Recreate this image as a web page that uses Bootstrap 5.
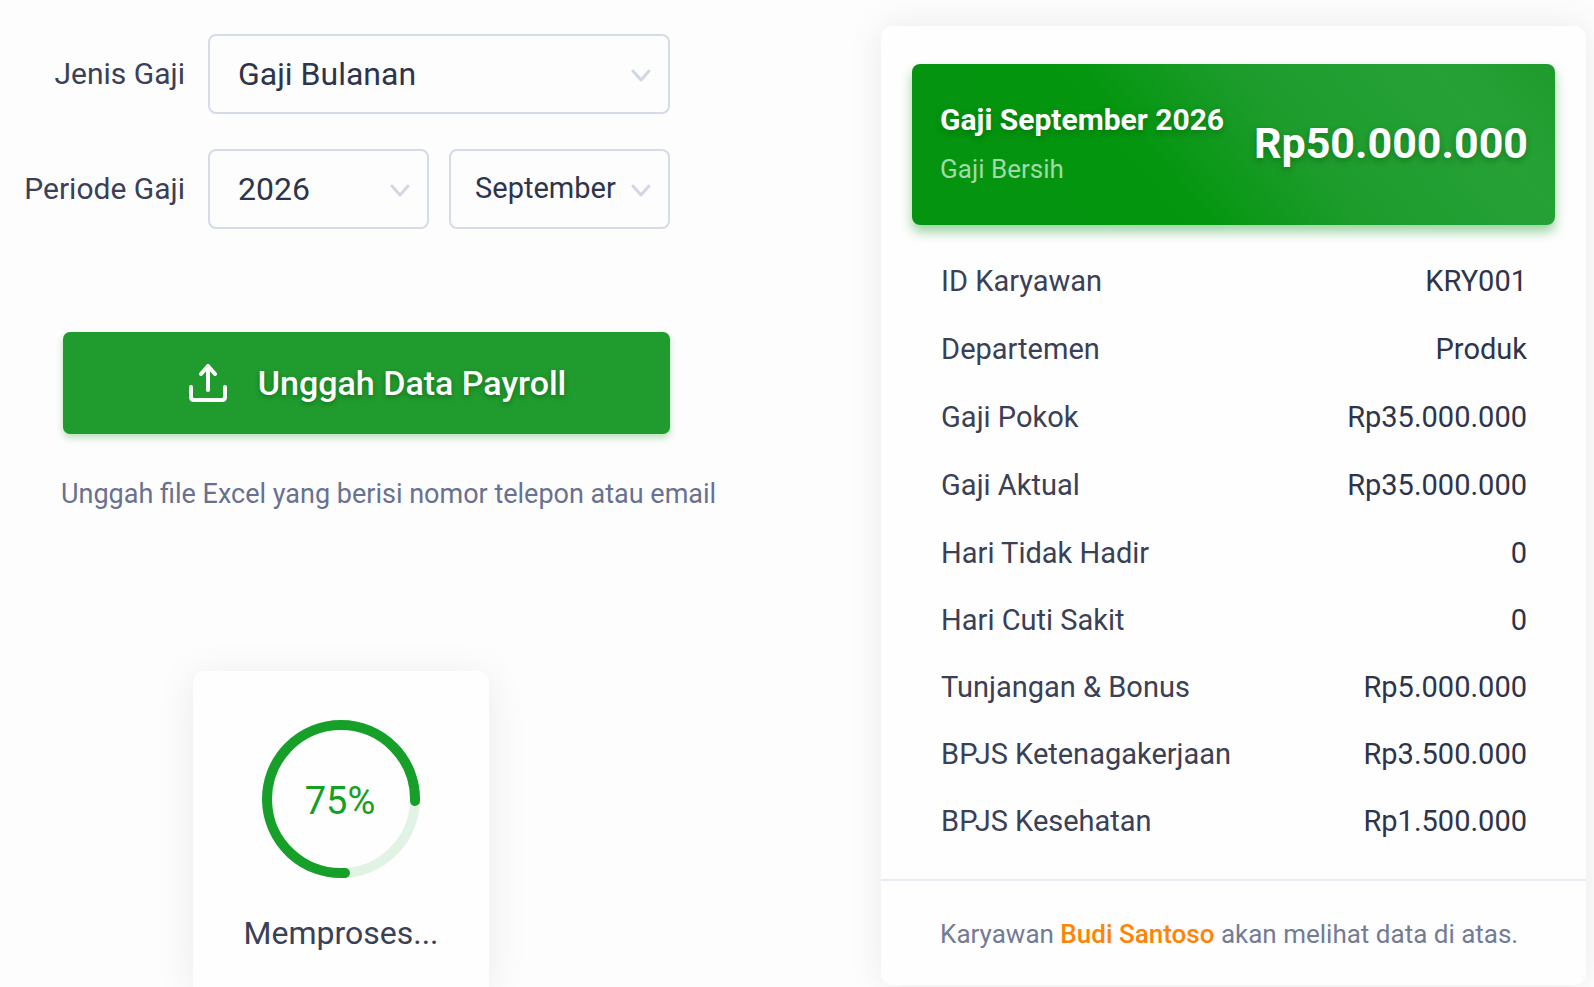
<!DOCTYPE html>
<html lang="id">
<head>
<meta charset="utf-8">
<meta name="viewport" content="width=device-width, initial-scale=1">
<title>Unggah Payroll</title>
<link href="https://cdn.jsdelivr.net/npm/bootstrap@5.3.0/dist/css/bootstrap.min.css" rel="stylesheet">
<style>
  :root { --ink: #3a4056; --ink-strong: #2d344b; --muted: #68718f; --line: #d5dbea; --green: #209b2e; }
  body { font-family: Roboto, "Liberation Sans", sans-serif; color: var(--ink); background: #fdfdfd; }
  .page { display: grid; grid-template-columns: 5fr 4fr; min-height: 100vh; padding-right: 8px; overflow: hidden; }
  .upload-form { padding: 34px 211px 0 0; }
  .field-row { display: grid; grid-template-columns: 185px 1fr; column-gap: 23px; align-items: center; margin-bottom: 35px; }
  .field-row label { font-size: 30px; line-height: 40px; text-align: right; white-space: nowrap; }
  .field-row .form-select {
    height: 80px; padding: 0 60px 0 28px; font-size: 32px; color: var(--ink-strong);
    border: 2px solid var(--line); border-radius: 8px; background-color: #fdfdfd;
    background-image: url("data:image/svg+xml,%3Csvg xmlns='http://www.w3.org/2000/svg' viewBox='0 0 20 18'%3E%3Cpath d='M2 6l8 9 8-9' fill='none' stroke='%23d2d7e5' stroke-width='3' stroke-linecap='round' stroke-linejoin='round'/%3E%3C/svg%3E");
    background-size: 20px 18px; background-position: right 17px center;
  }
  .field-row .form-select.month { padding-left: 24px; padding-right: 40px; font-size: 29px; }
  .btn-upload {
    display: flex; align-items: center; justify-content: center; gap: 31px;
    margin: 103px 0 0 63px; width: calc(100% - 63px); height: 102px; padding: 0 0 0 22px;
    font-size: 34px; font-weight: 500; color: #fff; background: var(--green); border: 0; border-radius: 7px;
    box-shadow: 0 4px 7px rgba(32, 155, 46, .3); text-shadow: 0 2px 5px rgba(0, 60, 0, .4);
  }
  .btn-upload:hover { color: #fff; background: #1a8c28; }
  .hint { margin: 38px 0 0 61px; font-size: 27px; line-height: 44px; color: var(--muted); white-space: nowrap; }
  .progress-panel {
    width: 296px; margin: 155px 0 0 193px; padding-top: 48px; flex-grow: 1; text-align: center;
    background: #fefefe; border-radius: 12px 12px 0 0; box-shadow: 0 6px 40px rgba(0, 0, 0, .08);
  }
  .ring { width: 160px; height: 160px; }
  .ring text { font-size: 38px; fill: #13a024; }
  .progress-panel p { margin: 34px 0 0; font-size: 32px; line-height: 40px; }
  .slip { align-self: start; margin-top: 26px; border: 0; border-radius: 12px; background: #fefefe; box-shadow: 0 0 36px rgba(0, 0, 0, .08); }
  .slip-banner {
    display: flex; align-items: center; justify-content: space-between; height: 161px; margin: 38px 31px 0; padding: 0 27px 0 28px;
    color: #fff; border-radius: 8px; background: linear-gradient(50deg, #04930f 0%, #04960f 38%, #1d9c2c 58%, #26a136 84%, #1f9b2d 100%);
    box-shadow: 0 7px 12px rgba(20, 150, 35, .42); white-space: nowrap; text-shadow: 0 3px 6px rgba(0, 60, 0, .35);
  }
  .slip-banner h2 { margin: 0 0 9px; font-size: 30px; line-height: 40px; font-weight: 700; }
  .slip-banner p { margin: 0; font-size: 26px; line-height: 40px; color: #a0dba6; text-shadow: none; }
  .slip-total { font-size: 43px; font-weight: 700; margin-bottom: 2px; }
  .slip-rows { width: calc(100% - 117px); margin: 22px 58px 25px 59px; font-size: 29px; line-height: 40px; }
  .slip-rows th { font-weight: 400; }
  .slip-rows td { text-align: right; color: var(--ink-strong); }
  .slip-rows tr { height: 67px; }
  .slip-rows tr:nth-child(-n+4) { height: 68px; }
  .slip-note { border-top: 2px solid #e9ebf4; padding: 33px 59px 31px; font-size: 26px; line-height: 40px; color: #747b95; white-space: nowrap; }
  .slip-note a { color: #ff8406; font-weight: 500; text-decoration: none; }
</style>
</head>
<body>
<main class="page">
  <section class="d-flex flex-column">
    <form class="upload-form">
      <div class="field-row">
        <label for="jenis">Jenis Gaji</label>
        <select class="form-select" id="jenis"><option>Gaji Bulanan</option></select>
      </div>
      <div class="field-row">
        <label for="tahun">Periode Gaji</label>
        <div class="row g-0">
          <div class="col pe-1 me-2"><select class="form-select" id="tahun"><option>2026</option></select></div>
          <div class="col ps-1 ms-1"><select class="form-select month" aria-label="Bulan"><option>September</option></select></div>
        </div>
      </div>
      <button type="button" class="btn btn-upload">
        <svg width="38" height="38" viewBox="0 0 38 38" fill="none" stroke="#fff" stroke-width="4" stroke-linecap="round" stroke-linejoin="round" aria-hidden="true"><path d="M2 23v10q0 3 3 3h28q3 0 3-3V23M19 26V3M12 10l7-8 7 8"/></svg>
        <span>Unggah Data Payroll</span>
      </button>
    </form>
    <p class="hint">Unggah file Excel yang berisi nomor telepon atau email</p>
    <div class="progress-panel">
      <svg class="ring" viewBox="0 0 160 160" role="img" aria-label="75%">
        <circle cx="80" cy="80" r="74" fill="none" stroke="#e1f3e4" stroke-width="10"/>
        <path d="M84 154A74 74 0 1 1 154 82" fill="none" stroke="#17a029" stroke-width="10" stroke-linecap="round"/>
        <text x="79" y="95" text-anchor="middle">75%</text>
      </svg>
      <p>Memproses...</p>
    </div>
  </section>

  <section class="card slip">
    <div class="slip-banner">
      <div>
        <h2>Gaji September 2026</h2>
        <p>Gaji Bersih</p>
      </div>
      <div class="slip-total">Rp50.000.000</div>
    </div>
    <table class="slip-rows">
      <tbody>
        <tr><th scope="row">ID Karyawan</th><td>KRY001</td></tr>
        <tr><th scope="row">Departemen</th><td>Produk</td></tr>
        <tr><th scope="row">Gaji Pokok</th><td>Rp35.000.000</td></tr>
        <tr><th scope="row">Gaji Aktual</th><td>Rp35.000.000</td></tr>
        <tr><th scope="row">Hari Tidak Hadir</th><td>0</td></tr>
        <tr><th scope="row">Hari Cuti Sakit</th><td>0</td></tr>
        <tr><th scope="row">Tunjangan &amp; Bonus</th><td>Rp5.000.000</td></tr>
        <tr><th scope="row">BPJS Ketenagakerjaan</th><td>Rp3.500.000</td></tr>
        <tr><th scope="row">BPJS Kesehatan</th><td>Rp1.500.000</td></tr>
      </tbody>
    </table>
    <div class="slip-note">Karyawan <a href="#">Budi Santoso</a> akan melihat data di atas.</div>
  </section>
</main>
<script src="https://cdn.jsdelivr.net/npm/bootstrap@5.3.0/dist/js/bootstrap.bundle.min.js"></script>
</body>
</html>
